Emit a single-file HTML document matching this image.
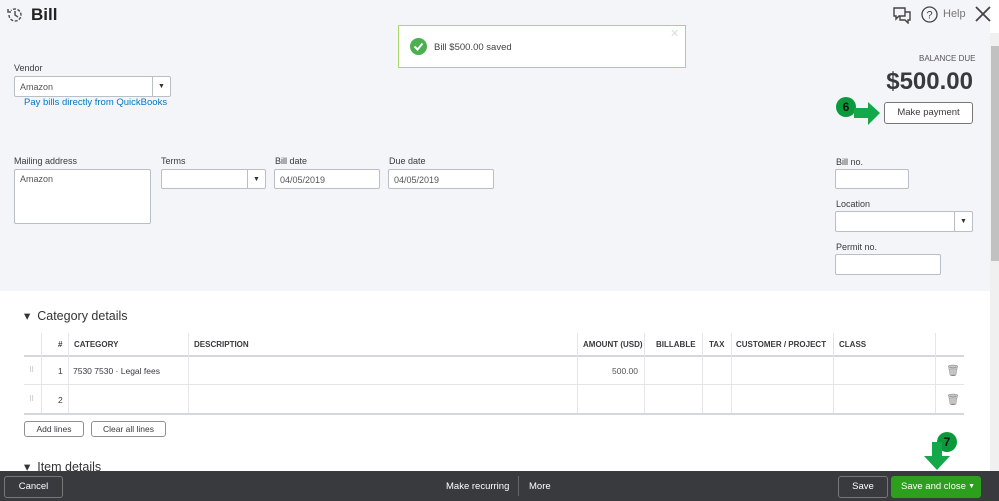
<!DOCTYPE html>
<html><head><meta charset="utf-8"><style>
*{box-sizing:border-box;margin:0;padding:0}
body{width:999px;height:501px;overflow:hidden;position:relative;background:#fff;font-family:"Liberation Sans",sans-serif;color:#393a3d}
.a{position:absolute}
.top{left:0;top:0;width:990px;height:291px;background:#f4f5f8}
.lbl{font-size:9px;color:#393a3d}
.in{background:#fff;border:1px solid #babec5;border-radius:2px;font-size:9px;color:#555;padding:0 0 0 5px;line-height:20px}
.dd{position:absolute;right:0;top:0;bottom:0;width:18px;border-left:1px solid #babec5;text-align:center;font-size:7px;line-height:20px;color:#333}
.th{font-size:8px;font-weight:bold;top:340px}
.vl{top:333px;height:80px;width:1px;background:#e3e5e8}
.btn{background:#fff;border:1px solid #8d9096;border-radius:3px;font-size:8.5px;text-align:center}
.green{background:#0a9a3c}
</style></head><body>
<div class="a top"></div>
<svg class="a" style="left:6px;top:6px" width="18" height="18" viewBox="0 0 18 18"><path d="M3 9a6 6 0 1 0 2-4.5" fill="none" stroke="#555" stroke-width="1.5" stroke-dasharray="3 1.5"/><path d="M2 3v3h3" fill="none" stroke="#555" stroke-width="1.5"/><path d="M9 5v4l3 2" fill="none" stroke="#555" stroke-width="1.5"/></svg>
<div class="a" style="left:31px;top:5px;font-size:17px;font-weight:bold;color:#222">Bill</div>
<svg class="a" style="left:892px;top:6px" width="20" height="18" viewBox="0 0 20 18"><path d="M2 2h11v8H7l-3 3v-3H2z M13 6h5v8h-2v3l-3-3H8v-4" fill="none" stroke="#444" stroke-width="1.4"/></svg>
<svg class="a" style="left:921px;top:6px" width="17" height="17" viewBox="0 0 17 17"><circle cx="8.5" cy="8.5" r="7.5" fill="none" stroke="#444" stroke-width="1.3"/><text x="8.5" y="12.5" font-size="11" text-anchor="middle" fill="#444" font-family="Liberation Sans">?</text></svg>
<div class="a" style="left:943px;top:8px;font-size:11px;color:#777">Help</div>
<svg class="a" style="left:975px;top:6px" width="16" height="16" viewBox="0 0 16 16"><path d="M1 1L15 15M15 1L1 15" stroke="#444" stroke-width="1.8"/></svg>
<div class="a" style="left:398px;top:25px;width:288px;height:43px;background:#fff;border:1px solid #a6d86b"></div>
<div class="a" style="left:410px;top:38px;width:17px;height:17px;border-radius:50%;background:#4caf50"></div>
<svg class="a" style="left:410px;top:38px" width="17" height="17"><path d="M4.5 8.5l3 3 5-6" fill="none" stroke="#fff" stroke-width="2"/></svg>
<div class="a" style="left:434px;top:42px;font-size:9.5px;color:#444">Bill $500.00 saved</div>
<div class="a" style="left:670px;top:27px;font-size:11px;color:#ddd">✕</div>
<div class="a lbl" style="left:14px;top:63px">Vendor</div>
<div class="a in" style="left:14px;top:76px;width:157px;height:21px">Amazon<div class="dd">▼</div></div>
<div class="a" style="left:24px;top:97px;font-size:9.5px;color:#0077c5">Pay bills directly from QuickBooks</div>
<div class="a" style="left:919px;top:54px;font-size:8px;color:#555">BALANCE DUE</div>
<div class="a" style="left:870px;top:68px;width:103px;text-align:right;font-size:24px;font-weight:bold;color:#393a3d">$500.00</div>
<div class="a btn" style="left:884px;top:102px;width:89px;height:22px;line-height:20px;border-color:#777;font-size:9.5px">Make payment</div>
<div class="a green" style="left:836px;top:97px;width:20px;height:20px;border-radius:50%;color:#111;font-weight:bold;font-size:12px;text-align:center;line-height:20px">6</div>
<svg class="a" style="left:852px;top:100px" width="30" height="28"><path d="M2 8h14V2l12 11-12 12v-7H2z" fill="#14a84a"/></svg>
<div class="a lbl" style="left:14px;top:156px">Mailing address</div>
<div class="a in" style="left:14px;top:169px;width:137px;height:55px;line-height:18px">Amazon</div>
<div class="a lbl" style="left:161px;top:156px">Terms</div>
<div class="a in" style="left:161px;top:169px;width:105px;height:20px"><div class="dd">▼</div></div>
<div class="a lbl" style="left:275px;top:156px">Bill date</div>
<div class="a in" style="left:274px;top:169px;width:106px;height:20px">04/05/2019</div>
<div class="a lbl" style="left:389px;top:156px">Due date</div>
<div class="a in" style="left:388px;top:169px;width:106px;height:20px">04/05/2019</div>
<div class="a lbl" style="left:836px;top:157px">Bill no.</div>
<div class="a in" style="left:835px;top:169px;width:74px;height:20px"></div>
<div class="a lbl" style="left:836px;top:199px">Location</div>
<div class="a in" style="left:835px;top:211px;width:138px;height:21px"><div class="dd">▼</div></div>
<div class="a lbl" style="left:836px;top:242px">Permit no.</div>
<div class="a in" style="left:835px;top:254px;width:106px;height:21px"></div>
<div class="a" style="left:990px;top:33px;width:9px;height:438px;background:#f0f0f0"></div>
<div class="a" style="left:991px;top:46px;width:8px;height:215px;background:#c1c1c1"></div>
<div class="a" style="left:24px;top:308px;font-size:12.5px;color:#333">▾ &nbsp;Category details</div>
<div class="a" style="left:24px;top:355px;width:940px;height:2px;background:#d4d7dc"></div>
<div class="a" style="left:24px;top:384px;width:940px;height:1px;background:#e3e5e8"></div>
<div class="a" style="left:24px;top:413px;width:940px;height:2px;background:#d4d7dc"></div>
<div class="a vl" style="left:41px"></div><div class="a vl" style="left:68px"></div><div class="a vl" style="left:188px"></div><div class="a vl" style="left:577px"></div><div class="a vl" style="left:644px"></div><div class="a vl" style="left:702px"></div><div class="a vl" style="left:731px"></div><div class="a vl" style="left:833px"></div><div class="a vl" style="left:935px"></div>
<div class="a th" style="left:58px">#</div><div class="a th" style="left:74px">CATEGORY</div><div class="a th" style="left:194px">DESCRIPTION</div><div class="a th" style="left:583px">AMOUNT (USD)</div><div class="a th" style="left:656px">BILLABLE</div><div class="a th" style="left:709px">TAX</div><div class="a th" style="left:736px">CUSTOMER / PROJECT</div><div class="a th" style="left:839px">CLASS</div>
<div class="a" style="left:29px;top:366px;font-size:7px;color:#aaa">⠿</div><div class="a" style="left:29px;top:395px;font-size:7px;color:#aaa">⠿</div>
<div class="a" style="left:58px;top:366px;font-size:8.5px">1</div><div class="a" style="left:58px;top:395px;font-size:8.5px">2</div>
<div class="a" style="left:73px;top:366px;font-size:8.5px">7530 7530 · Legal fees</div>
<div class="a" style="left:612px;top:366px;font-size:8.5px;color:#555">500.00</div>
<div class="a" style="left:946px;top:364px;font-size:11px;color:#888">🗑</div><div class="a" style="left:946px;top:393px;font-size:11px;color:#888">🗑</div>
<div class="a btn" style="left:24px;top:421px;width:60px;height:16px;line-height:14px">Add lines</div>
<div class="a btn" style="left:91px;top:421px;width:75px;height:16px;line-height:14px">Clear all lines</div>
<div class="a" style="left:24px;top:459px;font-size:12.5px;color:#333">▾ &nbsp;Item details</div>
<div class="a green" style="left:937px;top:432px;width:20px;height:20px;border-radius:50%;color:#111;font-weight:bold;font-size:12px;text-align:center;line-height:20px">7</div>
<svg class="a" style="left:922px;top:442px" width="30" height="28"><path d="M10 0h10v14h8L15 28 2 14h8z" fill="#14a84a"/></svg>
<div class="a" style="left:0;top:471px;width:999px;height:30px;background:#393a3d"></div>
<div class="a" style="left:4px;top:476px;width:59px;height:22px;border:1px solid #777;border-radius:3px;color:#fff;font-size:9.5px;text-align:center;line-height:20px">Cancel</div>
<div class="a" style="left:446px;top:481px;color:#fff;font-size:9.5px">Make recurring</div>
<div class="a" style="left:518px;top:476px;width:1px;height:20px;background:#666"></div>
<div class="a" style="left:529px;top:481px;color:#fff;font-size:9.5px">More</div>
<div class="a" style="left:838px;top:476px;width:50px;height:22px;border:1px solid #777;border-radius:3px;color:#fff;font-size:9.5px;text-align:center;line-height:20px">Save</div>
<div class="a" style="left:891px;top:476px;width:90px;height:22px;background:#2ca01c;border-radius:3px;color:#fff;font-size:9.5px;line-height:22px;padding-left:10px">Save and close<span style="position:absolute;right:6px;font-size:7px">▼</span></div>
</body></html>
